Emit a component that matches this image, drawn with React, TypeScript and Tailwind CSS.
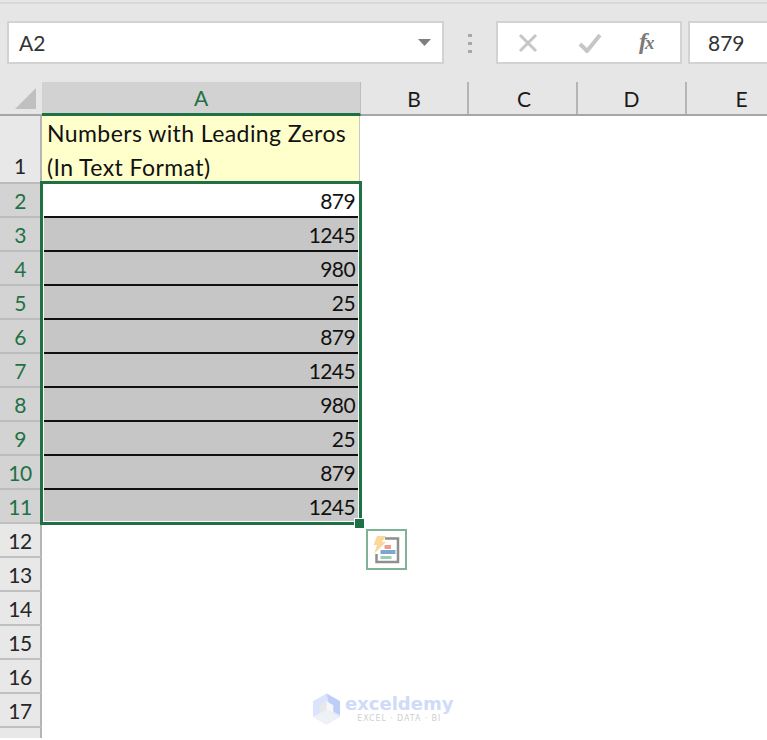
import React from "react";

const rows = [
  { n: 2, v: "879" },
  { n: 3, v: "1245" },
  { n: 4, v: "980" },
  { n: 5, v: "25" },
  { n: 6, v: "879" },
  { n: 7, v: "1245" },
  { n: 8, v: "980" },
  { n: 9, v: "25" },
  { n: 10, v: "879" },
  { n: 11, v: "1245" },
];
const emptyRows = [12, 13, 14, 15, 16, 17];
const font = "font-['Lato','Liberation_Sans',sans-serif]";

function RowHead({ n, active }: { n: number; active?: boolean }) {
  return (
    <div
      className={`w-[42px] h-[34px] shrink-0 border-r-[2px] border-t-[2px] flex items-center justify-center pt-[1px] text-[21px] tracking-[-0.5px] ${
        active
          ? "bg-[#d3d3d3] border-r-[#1f7145] border-t-[#bcbcbc] text-[#1f7145]"
          : "bg-[#e8e8e8] border-r-[#b5b5b5] border-t-[#c0c0c0] text-[#262626]"
      }`}
    >
      {n}
    </div>
  );
}

export default function App() {
  return (
    <div className={`relative w-[767px] h-[740px] overflow-hidden bg-white ${font} text-[#1a1a1a]`}>
      <div className="h-[82px] bg-[#e6e6e6] pt-[2px]">
        <div className="h-[2px] bg-[#d8d8d8]" />
        <div className="flex items-start pt-[17px] pl-[7px]">
          <div className="w-[437px] h-[43px] bg-white border-[2px] border-[#d2d2d2] flex items-center justify-between pl-[10px] pr-[11px] text-[21px] text-[#333]">
            <span>A2</span>
            <svg width="13" height="7" viewBox="0 0 13 7"><path d="M0 0h13L6.5 7z" fill="#7f7f7f" /></svg>
          </div>
          <div className="w-[52px] flex flex-col items-center gap-[5px] pt-[13px]">
            <div className="w-[4px] h-[3px] bg-[#a8a8a8]" />
            <div className="w-[4px] h-[3px] bg-[#a8a8a8]" />
            <div className="w-[4px] h-[3px] bg-[#a8a8a8]" />
          </div>
          <div className="w-[186px] h-[43px] bg-white border-[2px] border-[#d2d2d2] flex items-center">
            <svg className="ml-[20px]" width="20" height="20" viewBox="0 0 20 20"><path d="M2 2l16 16M18 2L2 18" stroke="#c6c6c6" strokeWidth="3" /></svg>
            <svg className="ml-[40px]" width="24" height="20" viewBox="0 0 24 20"><path d="M2 11l7 7L22 2" stroke="#c6c6c6" strokeWidth="4" fill="none" /></svg>
            <span className="ml-[37px] mb-[3px] font-['Liberation_Serif',serif] italic font-bold text-[24px] text-[#7a7a7a] tracking-[-2px]">f<span className="text-[19px]">x</span></span>
          </div>
          <div className="ml-[6px] flex-1 h-[43px] bg-white border-y-[2px] border-l-[2px] border-[#d2d2d2] flex items-center pl-[18px] text-[21px] text-[#333]">
            879
          </div>
        </div>
      </div>

      <div className="flex w-[830px] h-[34px] bg-[#e6e6e6] border-b-[2px] border-[#a6a6a6] text-[21px]">
        <div className="w-[42px] relative">
          <svg className="absolute left-[15px] top-[6px]" width="22" height="22" viewBox="0 0 22 22"><path d="M21 0v21H0z" fill="#c0c0c0" /></svg>
        </div>
        <div className="w-[319px] h-[34px] bg-[#d2d2d2] border-b-[3px] border-[#1f7145] border-r border-r-[#bdbdbd] flex items-center justify-center text-[#1f7145]">A</div>
        <div className="w-[108px] border-r-[2px] border-[#b5b5b5] flex items-center justify-center pt-[1px]">B</div>
        <div className="w-[109px] border-r-[2px] border-[#b5b5b5] flex items-center justify-center pt-[1px] pl-[3px]">C</div>
        <div className="w-[109px] border-r-[2px] border-[#b5b5b5] flex items-center justify-center pt-[1px]">D</div>
        <div className="w-[109px] flex items-center justify-center pt-[1px]">E</div>
      </div>

      <div className="flex h-[66px]">
        <div className="w-[42px] h-[66px] bg-[#e8e8e8] border-r-[2px] border-r-[#b5b5b5] flex items-end justify-center pb-[1px] text-[21px] text-[#262626]">1</div>
        <div className="w-[318px] bg-[#ffffcc] border-r border-[#c8c8c8] pl-[5px] text-[23px] tracking-[0.42px] leading-[34px] text-[#111]">
          <div>Numbers with Leading Zeros</div>
          <div>(In Text Format)</div>
        </div>
      </div>

      {rows.map((r, i) => (
        <div key={r.n} className="flex h-[34px]">
          <RowHead n={r.n} active />
          <div
            className={`w-[318px] h-[34px] flex items-center justify-end pr-[5px] pt-[1px] text-[21px] tracking-[-0.6px] text-[#111] border-t-[2px] border-[#111] ${
              i === 0 ? "bg-white" : "bg-[#c6c6c6]"
            }`}
          >
            {r.v}
          </div>
        </div>
      ))}

      {emptyRows.map((n) => (
        <RowHead key={n} n={n} />
      ))}
      <div className="w-[42px] h-[12px] bg-[#e8e8e8] border-r-[2px] border-t-[2px] border-r-[#b5b5b5] border-t-[#c0c0c0]" />

      {/* selection outline */}
      <div className="absolute left-[40px] top-[181px] w-[322px] h-[344px] border-[3px] border-[#1f7145] shadow-[inset_0_0_0_1px_#ffffff]" />
      <div className="absolute left-[354px] top-[518px] w-[11px] h-[11px] bg-[#1f7145] border border-white" />

      {/* quick analysis button */}
      <div className="absolute left-[366px] top-[529px] w-[41px] h-[41px] bg-white border-[2px] border-[#7fb296] flex items-center justify-center">
        <svg width="30" height="30" viewBox="0 0 30 30">
          <path d="M13 3.5h13v23.5H4.5v-8" fill="#fff" stroke="#8f8f8f" strokeWidth="2.5" />
          <path d="M12.5 10h6.5v4h-6.5z" fill="#e8a08c" />
          <path d="M8.5 15h15v4h-15z" fill="#7ea6d3" />
          <path d="M8.5 21h11v3h-11z" fill="#9ccbb8" />
          <path d="M5 1h9l-4 6h4L2 19l3-9H1.500z" fill="#fbd79a" />
        </svg>
      </div>

      {/* watermark */}
      <div className="absolute left-[312px] top-[693px] flex items-start gap-[4px]">
        <svg width="29" height="32" viewBox="0 0 30 32">
          <path d="M15 0l14 8v16l-14 8L1 24V8z" fill="#dbe4fb" />
          <path d="M15 0l14 8v14l-12-6V8z" fill="#bccdf6" />
          <path d="M8 12l7-4v9l-7 4z" fill="#e8e8e8" />
          <path d="M15 8l7 4v8l-7-3z" fill="#f7f7f7" />
          <path d="M1 24l14-7 14 7-14 8z" fill="#eef1f5" />
        </svg>
        <div className="flex flex-col items-center font-['DejaVu_Sans',sans-serif]">
          <span className="text-[18px] leading-[20px] mt-[1px] font-bold text-[#cfdbf8]">exceldemy</span>
          <span className="text-[8px] leading-[9px] text-[#d0d0d0] tracking-[0.9px]">EXCEL · DATA · BI</span>
        </div>
      </div>
    </div>
  );
}
